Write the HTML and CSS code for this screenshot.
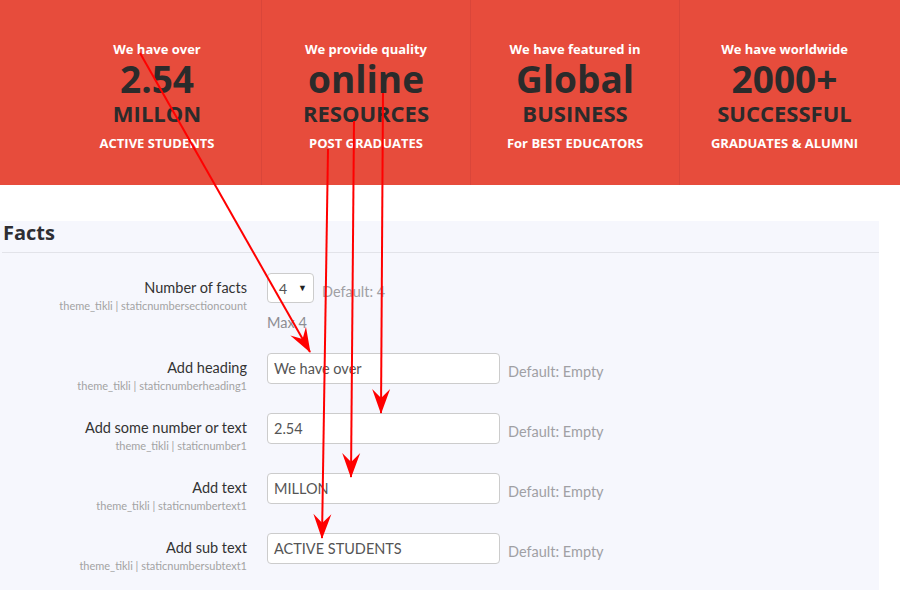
FILE: index.html
```html
<!DOCTYPE html>
<html>
<head>
<meta charset="utf-8">
<link rel="stylesheet" href="styles.css">
</head>
<body>
<div class="page">
  <section class="banner">
    <div class="stat">
      <div class="stat-top">We have over</div>
      <div class="stat-big">2.54</div>
      <div class="stat-mid">MILLON</div>
      <div class="stat-sub">ACTIVE STUDENTS</div>
    </div>
    <div class="stat">
      <div class="stat-top">We provide quality</div>
      <div class="stat-big">online</div>
      <div class="stat-mid">RESOURCES</div>
      <div class="stat-sub">POST GRADUATES</div>
    </div>
    <div class="stat">
      <div class="stat-top">We have featured in</div>
      <div class="stat-big">Global</div>
      <div class="stat-mid">BUSINESS</div>
      <div class="stat-sub">For BEST EDUCATORS</div>
    </div>
    <div class="stat stat-last">
      <div class="stat-top">We have worldwide</div>
      <div class="stat-big">2000+</div>
      <div class="stat-mid">SUCCESSFUL</div>
      <div class="stat-sub">GRADUATES &amp; ALUMNI</div>
    </div>
  </section>

  <section class="panel">
    <h2 class="panel-title">Facts</h2>
    <div class="form">
      <div class="row row-first">
        <div class="label">
          <div class="label-main">Number of facts</div>
          <div class="label-key">theme_tikli | staticnumbersectioncount</div>
        </div>
        <div class="control">
          <div class="control-line">
            <div class="select"><span>4</span><span class="caret">&#9660;</span></div>
            <span class="default">Default: 4</span>
          </div>
          <div class="hint">Max 4</div>
        </div>
      </div>
      <div class="row">
        <div class="label">
          <div class="label-main">Add heading</div>
          <div class="label-key">theme_tikli | staticnumberheading1</div>
        </div>
        <div class="control-line">
          <div class="input">We have over</div>
          <span class="default">Default: Empty</span>
        </div>
      </div>
      <div class="row">
        <div class="label">
          <div class="label-main">Add some number or text</div>
          <div class="label-key">theme_tikli | staticnumber1</div>
        </div>
        <div class="control-line">
          <div class="input">2.54</div>
          <span class="default">Default: Empty</span>
        </div>
      </div>
      <div class="row">
        <div class="label">
          <div class="label-main">Add text</div>
          <div class="label-key">theme_tikli | staticnumbertext1</div>
        </div>
        <div class="control-line">
          <div class="input">MILLON</div>
          <span class="default">Default: Empty</span>
        </div>
      </div>
      <div class="row">
        <div class="label">
          <div class="label-main">Add sub text</div>
          <div class="label-key">theme_tikli | staticnumbersubtext1</div>
        </div>
        <div class="control-line">
          <div class="input">ACTIVE STUDENTS</div>
          <span class="default">Default: Empty</span>
        </div>
      </div>
    </div>
  </section>

  <svg class="arrows" width="900" height="596" viewBox="0 0 900 596" xmlns="http://www.w3.org/2000/svg">
    <defs>
      <marker id="head" markerUnits="userSpaceOnUse" viewBox="-26 -10 28 20" markerWidth="28" markerHeight="20" refX="0" refY="0" orient="auto">
        <path d="M1,0 L-24,-9 L-15,0 L-24,9 Z" fill="#ff0000"/>
      </marker>
    </defs>
    <g stroke="#ff0000" stroke-width="2" fill="none">
      <line x1="140" y1="53" x2="310" y2="352" marker-end="url(#head)"/>
      <line x1="383" y1="93" x2="381" y2="413" marker-end="url(#head)"/>
      <line x1="354" y1="121" x2="351" y2="477" marker-end="url(#head)"/>
      <line x1="328" y1="149" x2="322" y2="538" marker-end="url(#head)"/>
    </g>
  </svg>
</div>
</body>
</html>
```

FILE: styles.css
```css
* { box-sizing: border-box; }

html, body {
  margin: 0;
  padding: 0;
  background: #ffffff;
}

.page {
  position: relative;
  width: 900px;
  height: 596px;
  overflow: hidden;
}

.banner {
  display: flex;
  height: 185px;
  background: #e74c3c;
  padding-left: 53px;
}

.stat {
  width: 209px;
  flex: 0 0 209px;
  border-right: 1px solid #d9463a;
  text-align: center;
  font-family: "Open Sans", "Liberation Sans", sans-serif;
  font-weight: 700;
  padding-top: 40px;
}

.stat-last {
  border-right: none;
}

.stat-top {
  color: #ffffff;
  font-size: 13px;
  line-height: 18px;
}

.stat-big {
  color: #2b2b2b;
  font-size: 37px;
  line-height: 38px;
  margin-top: 2px;
}

.stat-mid {
  color: #2b2b2b;
  font-size: 22px;
  line-height: 26px;
  margin-top: 2px;
}

.stat-sub {
  color: #ffffff;
  font-size: 13px;
  line-height: 18px;
  margin-top: 8px;
}

.panel {
  margin-top: 36px;
  width: 879px;
  height: 369px;
  background: #f6f7fd;
}

.panel-title {
  margin: 0 0 0 2px;
  padding: 0 0 0 1px;
  height: 32px;
  border-bottom: 1px solid #e2e3e9;
  font-family: "Open Sans", "Liberation Sans", sans-serif;
  font-weight: 700;
  font-size: 20px;
  line-height: 24px;
  color: #2e2e33;
}

.form {
  padding-top: 20px;
  display: flex;
  flex-direction: column;
}

.row {
  display: grid;
  grid-template-columns: 247px auto;
  column-gap: 20px;
  height: 60px;
  align-items: start;
}

.row-first {
  height: 80px;
}

.label {
  text-align: right;
  padding-top: 5px;
  font-family: Lato, "Open Sans", sans-serif;
}

.label-main {
  font-size: 14.5px;
  line-height: 20px;
  color: #333333;
}

.label-key {
  font-size: 11px;
  line-height: 14px;
  margin-top: 1px;
  color: #a3a3a3;
}

.control-line {
  display: flex;
  align-items: flex-start;
}

.select {
  width: 47px;
  height: 30px;
  border: 1px solid #cccccc;
  border-radius: 4px;
  background: #ffffff;
  display: flex;
  align-items: center;
  justify-content: space-between;
  padding: 0 6px 0 11px;
  font-family: Lato, "Open Sans", sans-serif;
  font-size: 14px;
  color: #555555;
}

.caret {
  font-size: 9px;
  color: #222222;
  margin-top: -2px;
}

.default {
  font-family: Lato, "Open Sans", sans-serif;
  font-size: 14.5px;
  line-height: 20px;
  color: #a0a0a4;
  margin-left: 8px;
  padding-top: 9px;
}

.hint {
  font-family: Lato, "Open Sans", sans-serif;
  font-size: 14.5px;
  line-height: 20px;
  color: #8d8d92;
  margin-top: 10px;
}

.input {
  width: 233px;
  height: 31px;
  border: 1px solid #cccccc;
  border-radius: 4px;
  background: #ffffff;
  padding: 0 6px;
  font-family: Lato, "Open Sans", sans-serif;
  font-size: 14.5px;
  line-height: 29px;
  color: #555555;
}

.arrows {
  position: absolute;
  top: 0;
  left: 0;
  pointer-events: none;
}
```
